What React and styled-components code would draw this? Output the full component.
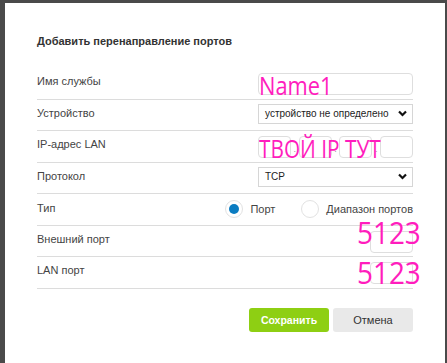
import React from "react";
import styled, { createGlobalStyle } from "styled-components";

const GlobalStyle = createGlobalStyle`
  html, body {
    margin: 0;
    padding: 0;
    background: #4a4a4a;
    font-family: "Liberation Sans", Arial, sans-serif;
  }
`;

/* затемнённый фон и само окно */
const Backdrop = styled.div`
  width: 447px;
  height: 363px;
  overflow: hidden;
  box-sizing: border-box;
  padding: 3px 2px 0 5px;
  background: #4a4a4a;
`;

const Modal = styled.div`
  position: relative;
  background: #fff;
  height: 100%;
  box-sizing: border-box;
  padding: 31px 32px 0 32px;
`;

const Title = styled.div`
  font-size: 11px;
  font-weight: bold;
  color: #333;
  line-height: 14px;
  margin-bottom: 20px;
`;

const Row = styled.div`
  display: flex;
  justify-content: space-between;
  align-items: flex-start;
  height: 31.55px;
  box-sizing: border-box;
  border-bottom: 1px solid #dcdcdc;
`;

const Label = styled.div`
  font-size: 11px;
  color: #444;
  line-height: ${(p) => p.lh || 27}px;
`;

const Input = styled.div`
  width: ${(p) => p.w || 155}px;
  height: 22px;
  margin-top: 5px;
  box-sizing: border-box;
  border: 1px solid #dedede;
  border-radius: 4px;
  background: #fff;
`;

const Select = styled.div`
  width: 155px;
  height: 20px;
  margin-top: 4px;
  box-sizing: border-box;
  border: 1px solid #d6d6d6;
  display: flex;
  align-items: center;
  justify-content: space-between;
  padding: 0 5px 0 6px;
  font-size: 10px;
  color: #222;
`;

const IpGroup = styled.div`
  display: flex;
  align-items: flex-end;
`;

const Dot = styled.span`
  width: 7.7px;
  text-align: center;
  font-size: 9px;
  color: #999;
  line-height: 18px;
`;

const Radios = styled.div`
  display: flex;
  align-items: center;
  margin-top: 6px;
`;

const Radio = styled.span`
  width: 18px;
  height: 18px;
  box-sizing: border-box;
  border-radius: 50%;
  border: 1px solid #e2e2e2;
  display: flex;
  align-items: center;
  justify-content: center;
  margin-right: 7px;
  &::after {
    content: "";
    width: 10px;
    height: 10px;
    border-radius: 50%;
    background: ${(p) => (p.checked ? "#0b7cc1" : "transparent")};
  }
`;

const RadioText = styled.span`
  font-size: 11px;
  color: #444;
  margin-right: ${(p) => p.mr || 0}px;
`;

const Buttons = styled.div`
  display: flex;
  justify-content: flex-end;
  gap: 4px;
  margin-top: 19px;
`;

const Button = styled.div`
  width: 80px;
  height: 24px;
  border-radius: 3px;
  display: flex;
  align-items: center;
  justify-content: center;
  font-size: ${(p) => (p.primary ? "10.5px" : "11px")};
  font-weight: ${(p) => (p.primary ? "bold" : "normal")};
  background: ${(p) => (p.primary ? "#8ecf13" : "#e9e9e9")};
  color: ${(p) => (p.primary ? "#fff" : "#333")};
`;

/* розовые надписи поверх полей */
const Note = styled.span`
  position: absolute;
  left: ${(p) => p.x}px;
  top: ${(p) => p.y}px;
  font-family: "Open Sans", sans-serif;
  font-size: ${(p) => p.size}px;
  line-height: 1;
  color: #ff1dbd;
  white-space: nowrap;
  transform: scaleX(${(p) => p.sx || 0.84});
  transform-origin: left top;
`;

const Chevron = () => (
  <svg width="9" height="7" viewBox="0 0 9 7">
    <path d="M1 1.5 L4.5 5 L8 1.5" fill="none" stroke="#111" strokeWidth="2.2" />
  </svg>
);

export default function App() {
  return (
    <Backdrop>
      <GlobalStyle />
      <Modal>
        <Title>Добавить перенаправление портов</Title>
        <Row>
          <Label>Имя службы</Label>
          <Input />
        </Row>
        <Row>
          <Label>Устройство</Label>
          <Select>
            устройство не определено
            <Chevron />
          </Select>
        </Row>
        <Row>
          <Label>IP-адрес LAN</Label>
          <IpGroup>
            <Input w={33} />
            <Dot>.</Dot>
            <Input w={33} />
            <Dot>.</Dot>
            <Input w={33} />
            <Dot>.</Dot>
            <Input w={33} />
          </IpGroup>
        </Row>
        <Row>
          <Label>Протокол</Label>
          <Select>
            TCP
            <Chevron />
          </Select>
        </Row>
        <Row>
          <Label lh={29}>Тип</Label>
          <Radios>
            <Radio checked />
            <RadioText mr={26}>Порт</RadioText>
            <Radio />
            <RadioText>Диапазон портов</RadioText>
          </Radios>
        </Row>
        <Row>
          <Label>Внешний порт</Label>
          <Input w={43} />
        </Row>
        <Row>
          <Label>LAN порт</Label>
          <Input w={43} />
        </Row>
        <Buttons>
          <Button primary>Сохранить</Button>
          <Button>Отмена</Button>
        </Buttons>

        <Note x={254} y={68.5} size={26}>Name1</Note>
        <Note x={254} y={131.5} size={26} sx={0.8}>ТВОЙ IP ТУТ</Note>
        <Note x={352} y={213.6} size={31} sx={0.9}>5123</Note>
        <Note x={352} y={253.6} size={31} sx={0.9}>5123</Note>
      </Modal>
    </Backdrop>
  );
}
